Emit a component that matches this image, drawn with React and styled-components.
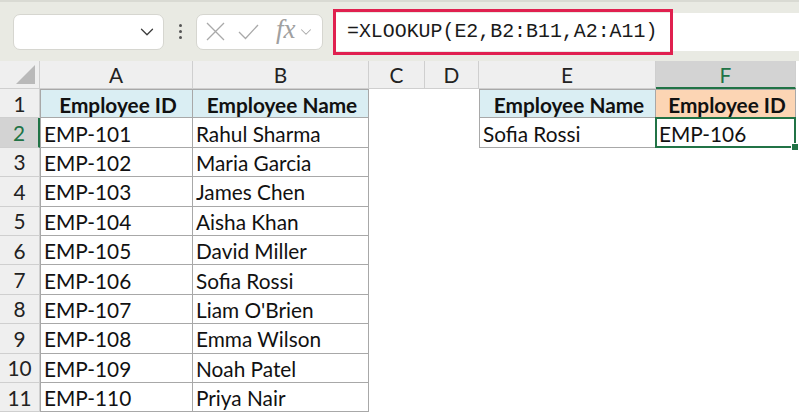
import React from "react";
import styled, { createGlobalStyle } from "styled-components";
import { ChevronDown } from "lucide-react";

const GREEN = "#217346";

const GlobalStyle = createGlobalStyle`
  body {
    margin: 0;
    background: #ffffff;
    overflow: hidden;
    font-family: "Lato", "Open Sans", sans-serif;
  }
`;

const Toolbar = styled.div`
  display: flex;
  align-items: center;
  height: 59px;
  border-top: 2px solid #d9dad3;
  background: #e9eae3;
  padding-left: 13px;
`;

const NameBox = styled.div`
  display: flex;
  align-items: center;
  justify-content: flex-end;
  box-sizing: border-box;
  width: 151px;
  height: 36px;
  padding-right: 5px;
  background: #ffffff;
  border: 1px solid #d6d6d0;
  border-radius: 7px;
  color: #3c3c3c;
`;

const Dots = styled.div`
  display: flex;
  flex-direction: column;
  align-items: center;
  gap: 3px;
  width: 32px;
  span {
    width: 3px;
    height: 3px;
    border-radius: 50%;
    background: #555555;
  }
`;

const FnButtons = styled.div`
  display: flex;
  align-items: center;
  box-sizing: border-box;
  width: 127px;
  height: 36px;
  padding-left: 9px;
  background: #ffffff;
  border: 1px solid #d6d6d0;
  border-radius: 7px;
  color: #a9a9a9;
  svg {
    flex-shrink: 0;
  }
`;

const Mark = styled.svg`
  margin-left: ${(p) => p.$gap || 0}px;
`;

const Fx = styled.span`
  font-family: "Liberation Serif", serif;
  font-style: italic;
  font-size: 27px;
  color: #a0a0a0;
  margin: -4px 1px 0 17px;
`;

const FormulaBar = styled.div`
  flex: 1;
  display: flex;
  align-items: center;
  height: 38px;
  margin-left: 10px;
  background: #ffffff;
`;

const Highlight = styled.div`
  display: flex;
  align-items: center;
  box-sizing: border-box;
  width: 340px;
  height: 46px;
  padding-left: 11px;
  border: 3px solid #e0204f;
  font-family: "Liberation Mono", monospace;
  font-size: 19.9px;
  color: #1a1a1a;
  white-space: nowrap;
`;

const Sheet = styled.div`
  display: grid;
  grid-template-columns: 40px 153px 176px 56px 54px 177px 140px 3px;
  grid-template-rows: 28px repeat(11, 29.4px);
  font-size: 20.8px;
  color: #111111;
`;

const Corner = styled.div`
  position: relative;
  background: #efefef;
  border-right: 1px solid #cfcfcf;
  border-bottom: 1px solid #cfcfcf;
  &::after {
    content: "";
    position: absolute;
    left: 16px;
    bottom: 4px;
    width: 19px;
    height: 19px;
    background: #b9b9b9;
    clip-path: polygon(100% 0, 100% 100%, 0 100%);
  }
`;

const ColHead = styled.div`
  display: flex;
  align-items: center;
  justify-content: center;
  box-sizing: border-box;
  background: ${(p) => (p.$active ? "#d3d3d3" : "#efefef")};
  color: ${(p) => (p.$active ? GREEN : "#222222")};
  border-right: 1px solid #cfcfcf;
  border-bottom: ${(p) => (p.$active ? `2px solid ${GREEN}` : "1px solid #cfcfcf")};
`;

const RowHead = styled.div`
  display: flex;
  align-items: center;
  justify-content: center;
  box-sizing: border-box;
  background: ${(p) => (p.$active ? "#d3d3d3" : "#efefef")};
  color: ${(p) => (p.$active ? GREEN : "#222222")};
  border-right: ${(p) => (p.$active ? `2px solid ${GREEN}` : "1px solid #cfcfcf")};
  border-bottom: 1px solid #cfcfcf;
`;

const Cell = styled.div`
  position: relative;
  display: flex;
  align-items: center;
  justify-content: ${(p) => (p.$head ? "center" : "flex-start")};
  box-sizing: border-box;
  padding-left: 3px;
  padding-top: 1px;
  background: ${(p) => p.$fill || "#ffffff"};
  font-weight: ${(p) => (p.$head ? 700 : 400)};
  white-space: nowrap;
  ${(p) =>
    p.$boxed &&
    `
    border-right: 1px solid #a8a8a8;
    border-bottom: 1px solid #a8a8a8;
  `}
  ${(p) => p.$top && "border-top: 1px solid #a8a8a8;"}
  ${(p) => p.$left && "border-left: 1px solid #a8a8a8;"}
  ${(p) =>
    p.$selected &&
    `
    &::after {
      content: "";
      position: absolute;
      inset: -1px;
      border: 2px solid ${GREEN};
    }
    &::before {
      content: "";
      position: absolute;
      right: -4px;
      bottom: -4px;
      width: 6px;
      height: 6px;
      background: ${GREEN};
      border: 1px solid #ffffff;
      z-index: 1;
    }
  `}
`;

const BLUE = "#daeef3";
const PEACH = "#fcd5b4";

// formula-bar cancel / enter marks, thin strokes like the greyed-out buttons
const CancelIcon = () => (
  <Mark width="19" height="19" viewBox="0 0 19 19" fill="none" stroke="currentColor" strokeWidth="1.3">
    <path d="M1 1 L18 18 M18 1 L1 18" />
  </Mark>
);

const EnterIcon = () => (
  <Mark $gap={13} width="21" height="16" viewBox="0 0 21 16" fill="none" stroke="currentColor" strokeWidth="1.3">
    <path d="M1 8 L7.5 14.5 L20 1" />
  </Mark>
);

const people = [
  ["EMP-101", "Rahul Sharma"],
  ["EMP-102", "Maria Garcia"],
  ["EMP-103", "James Chen"],
  ["EMP-104", "Aisha Khan"],
  ["EMP-105", "David Miller"],
  ["EMP-106", "Sofia Rossi"],
  ["EMP-107", "Liam O'Brien"],
  ["EMP-108", "Emma Wilson"],
  ["EMP-109", "Noah Patel"],
  ["EMP-110", "Priya Nair"],
];

const columns = ["A", "B", "C", "D", "E", "F"];

export default function App() {
  const rows = [["Employee ID", "Employee Name"], ...people];

  return (
    <>
      <GlobalStyle />
      <Toolbar>
        <NameBox>
          <ChevronDown size={22} strokeWidth={1.4} />
        </NameBox>
        <Dots>
          <span />
          <span />
          <span />
        </Dots>
        <FnButtons>
          <CancelIcon />
          <EnterIcon />
          <Fx>fx</Fx>
          <ChevronDown size={18} strokeWidth={1.4} />
        </FnButtons>
        <FormulaBar>
          <Highlight>=XLOOKUP(E2,B2:B11,A2:A11)</Highlight>
        </FormulaBar>
      </Toolbar>

      <Sheet>
        <Corner />
        {columns.map((c) => (
          <ColHead key={c} $active={c === "F"}>
            {c}
          </ColHead>
        ))}
        <div />

        {rows.map(([id, name], i) => {
          const n = i + 1;
          const head = n === 1;
          return (
            <React.Fragment key={n}>
              <RowHead $active={n === 2}>{n}</RowHead>
              <Cell $boxed $left $top={head} $head={head} $fill={head ? BLUE : null}>
                {id}
              </Cell>
              <Cell $boxed $top={head} $head={head} $fill={head ? BLUE : null}>
                {name}
              </Cell>
              <Cell />
              <Cell />
              {n === 1 && (
                <>
                  <Cell $boxed $left $top $head $fill={BLUE}>
                    Employee Name
                  </Cell>
                  <Cell $boxed $top $head $fill={PEACH}>
                    Employee ID
                  </Cell>
                </>
              )}
              {n === 2 && (
                <>
                  <Cell $boxed $left>
                    Sofia Rossi
                  </Cell>
                  <Cell $boxed $selected>
                    EMP-106
                  </Cell>
                </>
              )}
              {n > 2 && (
                <>
                  <Cell />
                  <Cell />
                </>
              )}
              <div />
            </React.Fragment>
          );
        })}
      </Sheet>
    </>
  );
}
